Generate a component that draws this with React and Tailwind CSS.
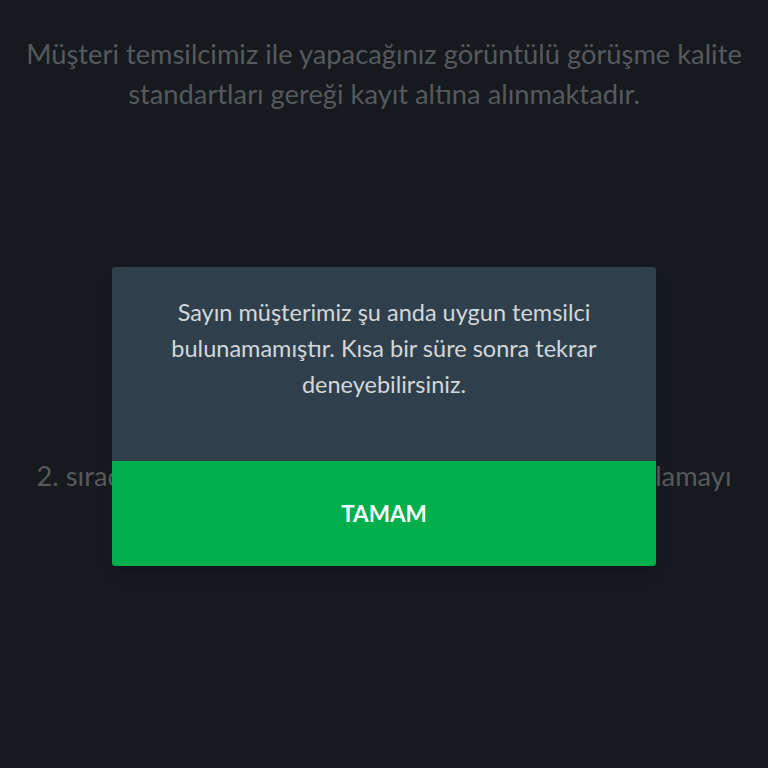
import React from 'react';

export default function App() {
  return (
    <div className="relative w-full h-[768px] overflow-hidden bg-[#161a1e] font-['Lato','Liberation_Sans',sans-serif]">
      {/* Background screen content */}
      <div className="px-4 pt-[34px] text-center text-[27.3px] leading-[40px] text-[#55595d]">
        <p>
          Müşteri temsilcimiz ile yapacağınız görüntülü görüşme kalite standartları gereği kayıt altına alınmaktadır.
        </p>
        <p className="mt-[342px]">
          2. sıradasınız. Görüşme başlayana kadar, lütfen uygulamayı kapatmayınız.
        </p>
      </div>

      {/* Dialog overlay */}
      <div className="absolute left-[112px] top-[267px] w-[544px] rounded-[3px] overflow-hidden shadow-lg">
        <div className="h-[194px] bg-[#2f404c] pt-[27px]">
          <p className="mx-auto max-w-[460px] text-center text-[23.5px] leading-[36px] text-[#d2d7da]">
            Sayın müşterimiz şu anda uygun temsilci bulunamamıştır. Kısa bir süre sonra tekrar deneyebilirsiniz.
          </p>
        </div>
        <button className="flex h-[105px] w-full items-center justify-center bg-[#00ae4b] text-[22.5px] font-bold text-white">
          TAMAM
        </button>
      </div>
    </div>
  );
}
